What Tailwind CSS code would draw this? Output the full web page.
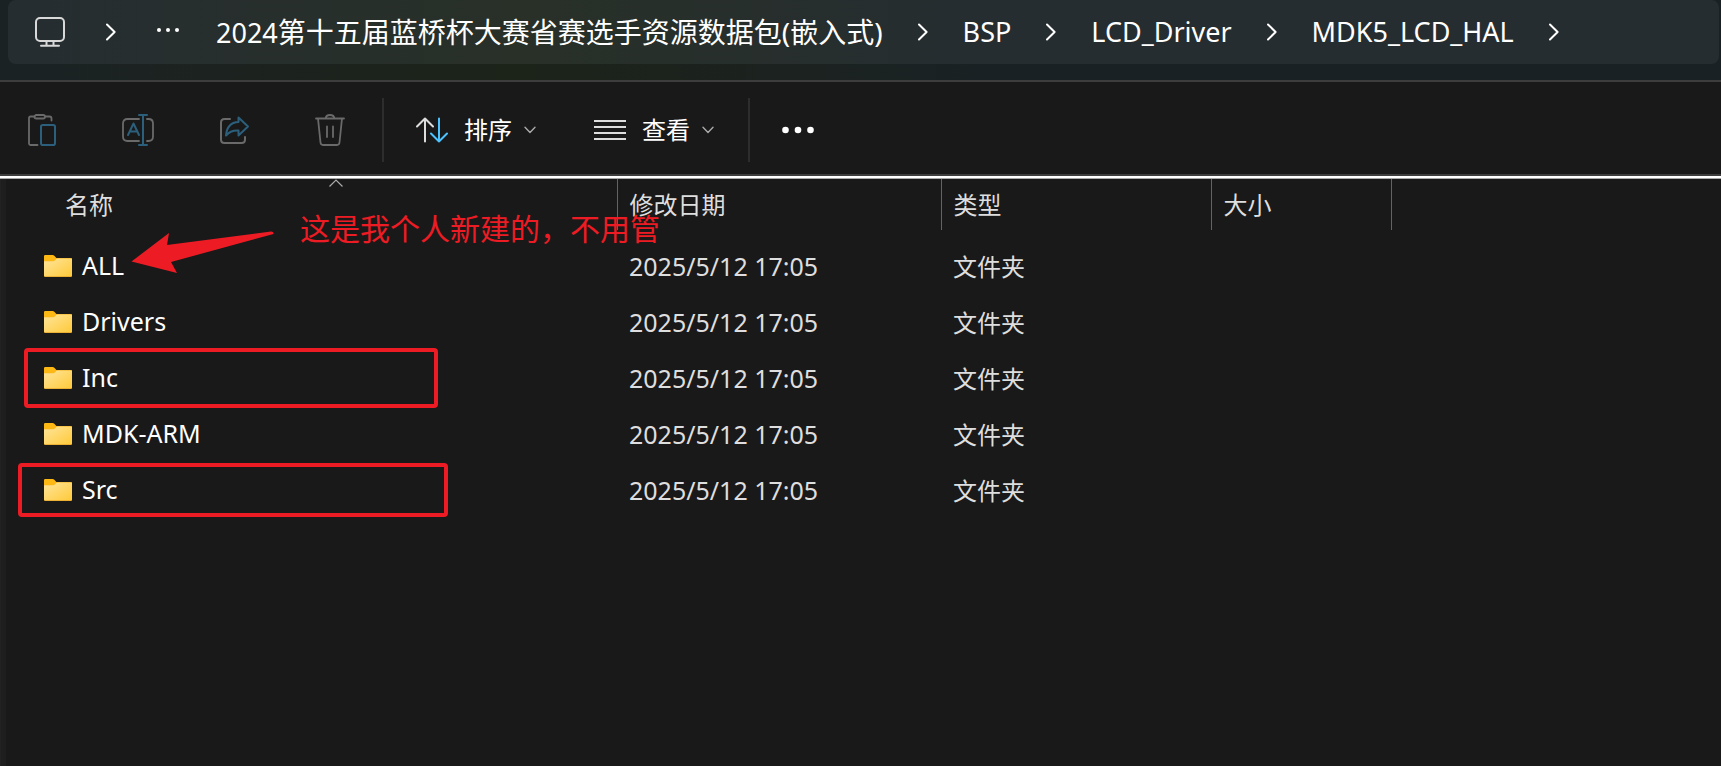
<!DOCTYPE html>
<html lang="zh-CN">
<head>
  <meta charset="UTF-8">
  <meta name="viewport" content="width=device-width, initial-scale=1.0">
  <title>MDK5_LCD_HAL</title>
  <script src="https://cdn.jsdelivr.net/npm/@tailwindcss/browser@4"></script>
</head>

<body class="min-h-screen flex flex-col bg-[#191919] text-white font-['Noto_Sans','Noto_Sans_CJK_SC',sans-serif]">
  <!-- Shared icons -->
  <svg class="absolute size-0" aria-hidden="true">
    <symbol id="chevron" viewBox="0 0 10 18">
      <path d="M1 1.5 8.6 9 1 16.5" fill="none" stroke="currentColor" stroke-width="2" stroke-linecap="round" stroke-linejoin="round"/>
    </symbol>
    <symbol id="caret" viewBox="0 0 12 8">
      <path d="M1 1.2 6 6.4 11 1.2" fill="none" stroke="currentColor" stroke-width="1.4" stroke-linecap="round" stroke-linejoin="round"/>
    </symbol>
    <linearGradient id="folderFill" x1="0" y1="0" x2="1" y2="1">
      <stop offset="0" stop-color="#ffe59b"/>
      <stop offset="1" stop-color="#ffca3a"/>
    </linearGradient>
    <symbol id="folder" viewBox="0 0 28 22">
      <path d="M0 1.2Q0 0 1.2 0H8.6Q9.6 0 10.3.8L12.4 3H27Q28 3 28 4V20H0Z" fill="#fdb813"/>
      <path d="M0 6.2H8.8Q10 6.2 10.8 5.4L12 4.2Q12.5 3.6 13.4 3.6H27Q28 3.6 28 4.6V21Q28 22 27 22H1Q0 22 0 21Z" fill="#e5a52a"/>
      <path d="M0 6.2H8.8Q10 6.2 10.8 5.4L12 4.2Q12.5 3.6 13.4 3.6H27Q28 3.6 28 4.6V20.2Q28 21.2 27 21.2H1Q0 21.2 0 20.2Z" fill="url(#folderFill)"/>
    </symbol>
  </svg>

  <!-- Address bar -->
  <header class="pl-2 pr-0.5 pb-4 border-b-2 border-[#3d3d3d] bg-linear-to-r from-[#1b2224] via-[#1c2319] via-30% to-[#1a2125] to-60%">
    <nav class="h-16 flex items-center rounded-lg bg-linear-to-r from-[#262d31] via-[#283028] via-30% to-[#262d30] to-55% text-[27px]" aria-label="地址">
      <a href="#" class="ml-[27px]" aria-label="此电脑">
        <svg class="size-[30px]" viewBox="0 0 30 30" fill="none" stroke="#d8d8d8" stroke-width="2" stroke-linecap="round">
          <rect x="1" y="1" width="28" height="23" rx="4"/>
          <path d="M11.5 24.5v4M18.5 24.5v4M6 28.8h18"/>
        </svg>
      </a>
      <svg class="w-2.5 h-[18px] ml-[41px]"><use href="#chevron"/></svg>
      <button type="button" class="ml-10" aria-label="更多">
        <svg class="w-6 h-5" viewBox="0 0 24 20" fill="#fff">
          <circle cx="3" cy="8" r="2"/><circle cx="12" cy="8" r="2"/><circle cx="21" cy="8" r="2"/>
        </svg>
      </button>
      <div class="flex items-center gap-[35px] ml-9 whitespace-nowrap">
        <a href="#"><span>2024</span><span class="text-[28px]">第十五届蓝桥杯大赛省赛选手资源数据包(嵌入式)</span></a>
        <svg class="w-2.5 h-[18px]"><use href="#chevron"/></svg>
        <a href="#">BSP</a>
        <svg class="w-2.5 h-[18px]"><use href="#chevron"/></svg>
        <a href="#">LCD_Driver</a>
        <svg class="w-2.5 h-[18px]"><use href="#chevron"/></svg>
        <a href="#">MDK5_LCD_HAL</a>
        <svg class="w-2.5 h-[18px]"><use href="#chevron"/></svg>
      </div>
    </nav>
  </header>

  <!-- Command bar -->
  <div class="h-[94px] flex items-center pl-0.5 pt-1 border-b-2 border-[#3d3d3d] text-2xl" role="toolbar">
    <div class="flex gap-4">
      <button type="button" class="w-20 h-16 flex items-center justify-center" aria-label="粘贴" disabled>
        <svg class="size-8" viewBox="0 0 32 32" fill="none" stroke="#6a6a6a" stroke-width="1.8" stroke-linecap="round">
          <path d="M8.5 2.5H4.5q-1.5 0-1.5 1.5V29.5q0 1.5 1.5 1.5H11.5M19.5 2.5h4q2 0 2 2v2"/>
          <rect x="8.5" y="1" width="10.5" height="3.5" rx="1.75"/>
          <rect x="15" y="11" width="14" height="20" rx="1.8" stroke="#2c5f7c" stroke-width="2"/>
        </svg>
      </button>
      <button type="button" class="w-20 h-16 flex items-center justify-center" aria-label="重命名" disabled>
        <svg class="size-8" viewBox="0 0 32 32" fill="none" stroke="#6a6a6a" stroke-width="1.8" stroke-linecap="round" stroke-linejoin="round">
          <path d="M17 5H5.5Q1 5 1 9.5v13Q1 27 5.5 27H17M25 5h1.5Q31 5 31 9.5v13Q31 27 26.5 27H25"/>
          <g stroke="#2c5f7c" stroke-width="2">
            <path d="M17 1h8M17 31h8M21 1v30"/>
            <path d="M6 21 11.5 9.5 17 21M8 17.5h7"/>
          </g>
        </svg>
      </button>
      <button type="button" class="w-20 h-16 flex items-center justify-center" aria-label="共享" disabled>
        <svg class="size-8" viewBox="0 0 32 32" fill="none" stroke="#6a6a6a" stroke-width="2" stroke-linecap="round" stroke-linejoin="round">
          <path d="M12 5H6.5Q3 5 3 8.5v17Q3 29 6.5 29h17q3.5 0 3.5-3.5V23"/>
          <path d="M20.5 3.5 30 12.5 20.5 21.5V16.5Q12.5 16 8 21.5 9 8.5 20.5 8Z" stroke="#2c5f7c"/>
        </svg>
      </button>
      <button type="button" class="w-20 h-16 flex items-center justify-center" aria-label="删除" disabled>
        <svg class="size-8" viewBox="0 0 32 32" fill="none" stroke="#6a6a6a" stroke-width="1.8" stroke-linecap="round" stroke-linejoin="round">
          <path d="M2 4.5H30M11.5 4.5Q12 1 16 1t4.5 3.5M4 4.5 6.5 28.5Q6.8 31 9 31H23q2.2 0 2.5-2.5L28 4.5M13 12.5v10.5M19 12.5v10.5"/>
        </svg>
      </button>
    </div>
    <div class="w-0.5 h-16 ml-3 bg-[#2d2d2d]"></div>
    <button type="button" class="flex items-center ml-8">
      <svg class="size-8" viewBox="0 0 32 32" fill="none" stroke-width="2" stroke-linecap="round" stroke-linejoin="round">
        <path d="M9 27.5V4.5M1 12.5 9 4.5 17 12.5" stroke="#ddd"/>
        <path d="M23 4.5V27.5M15 19.5 23 27.5 31 19.5" stroke="#4cc2ff"/>
      </svg>
      <span class="ml-4">排序</span>
      <svg class="w-3 h-2 ml-3 text-[#aaa]"><use href="#caret"/></svg>
    </button>
    <button type="button" class="flex items-center ml-[58px]">
      <svg class="size-8" viewBox="0 0 32 32" stroke="#ddd" stroke-width="2">
        <path d="M0 7H32M0 13H32M0 19H32M0 25H32"/>
      </svg>
      <span class="ml-4">查看</span>
      <svg class="w-3 h-2 ml-3 text-[#aaa]"><use href="#caret"/></svg>
    </button>
    <div class="w-0.5 h-16 ml-[34px] bg-[#2d2d2d]"></div>
    <button type="button" class="ml-8" aria-label="查看更多">
      <svg class="size-8" viewBox="0 0 32 32" fill="#fff">
        <circle cx="3.5" cy="16" r="3.3"/><circle cx="16" cy="16" r="3.3"/><circle cx="28.5" cy="16" r="3.3"/>
      </svg>
    </button>
  </div>

  <!-- File list -->
  <main class="relative flex-1 border-t-2 border-white">
    <div class="h-px bg-[#a8a8a8]"></div>
    <div class="absolute left-0 top-px bottom-0 w-1.5 bg-[#1e1e1e] border-l border-[#222]"></div>
    <table class="table-fixed w-[1391px] text-2xl text-left">
      <colgroup>
        <col class="w-[617px]">
        <col class="w-[324px]">
        <col class="w-[270px]">
        <col class="w-[180px]">
      </colgroup>
      <thead class="text-[#dedede]">
        <tr class="h-[51px]">
          <th class="font-normal pl-[65px] border-r border-[#636363]">名称</th>
          <th class="font-normal pl-3 border-r border-[#636363]">修改日期</th>
          <th class="font-normal pl-3 border-r border-[#636363]">类型</th>
          <th class="font-normal pl-3 border-r border-[#636363]">大小</th>
        </tr>
      </thead>
      <tbody id="files" class="text-[#dedede] before:block before:h-2"></tbody>
    </table>

    <!-- Annotations -->
    <svg class="absolute left-[329px] top-px w-3.5 h-2" viewBox="0 0 14 8" fill="none" stroke="#aaa" stroke-width="1.2">
      <path d="M.5 7.5 7 1 13.5 7.5"/>
    </svg>
    <svg class="absolute left-[131px] top-[53px] w-[143px] h-[42px]" viewBox="0 0 143 42" fill="#ed1c24">
      <path d="M.5 30.5 38 2 36 14 140 .5Q143 .5 142.500 3L40 31 46 42Z"/>
    </svg>
    <p class="absolute left-[300px] top-7 text-[30px] text-[#ed1c24] whitespace-nowrap">这是我个人新建的，不用管</p>
    <div class="absolute left-6 top-[170px] w-[414px] h-[60px] border-4 border-[#ed1c24] rounded-sm"></div>
    <div class="absolute left-[18px] top-[285px] w-[430px] h-[54px] border-4 border-[#ed1c24] rounded-sm"></div>
  </main>

  <script>
    const folders = ['ALL', 'Drivers', 'Inc', 'MDK-ARM', 'Src'];

    document.getElementById('files').innerHTML = folders.map((name) => `
      <tr class="h-14">
        <td class="pl-11 text-[25px] text-white">
          <div class="flex items-center gap-2.5">
            <svg class="w-7 h-[22px]"><use href="#folder"/></svg>
            <a href="#">${name}</a>
          </div>
        </td>
        <td class="pl-3 pt-0.5 text-[25px]">2025/5/12 17:05</td>
        <td class="pl-3 pt-0.5">文件夹</td>
        <td class="pl-3"></td>
      </tr>
    `).join('');
  </script>
</body>
</html>
